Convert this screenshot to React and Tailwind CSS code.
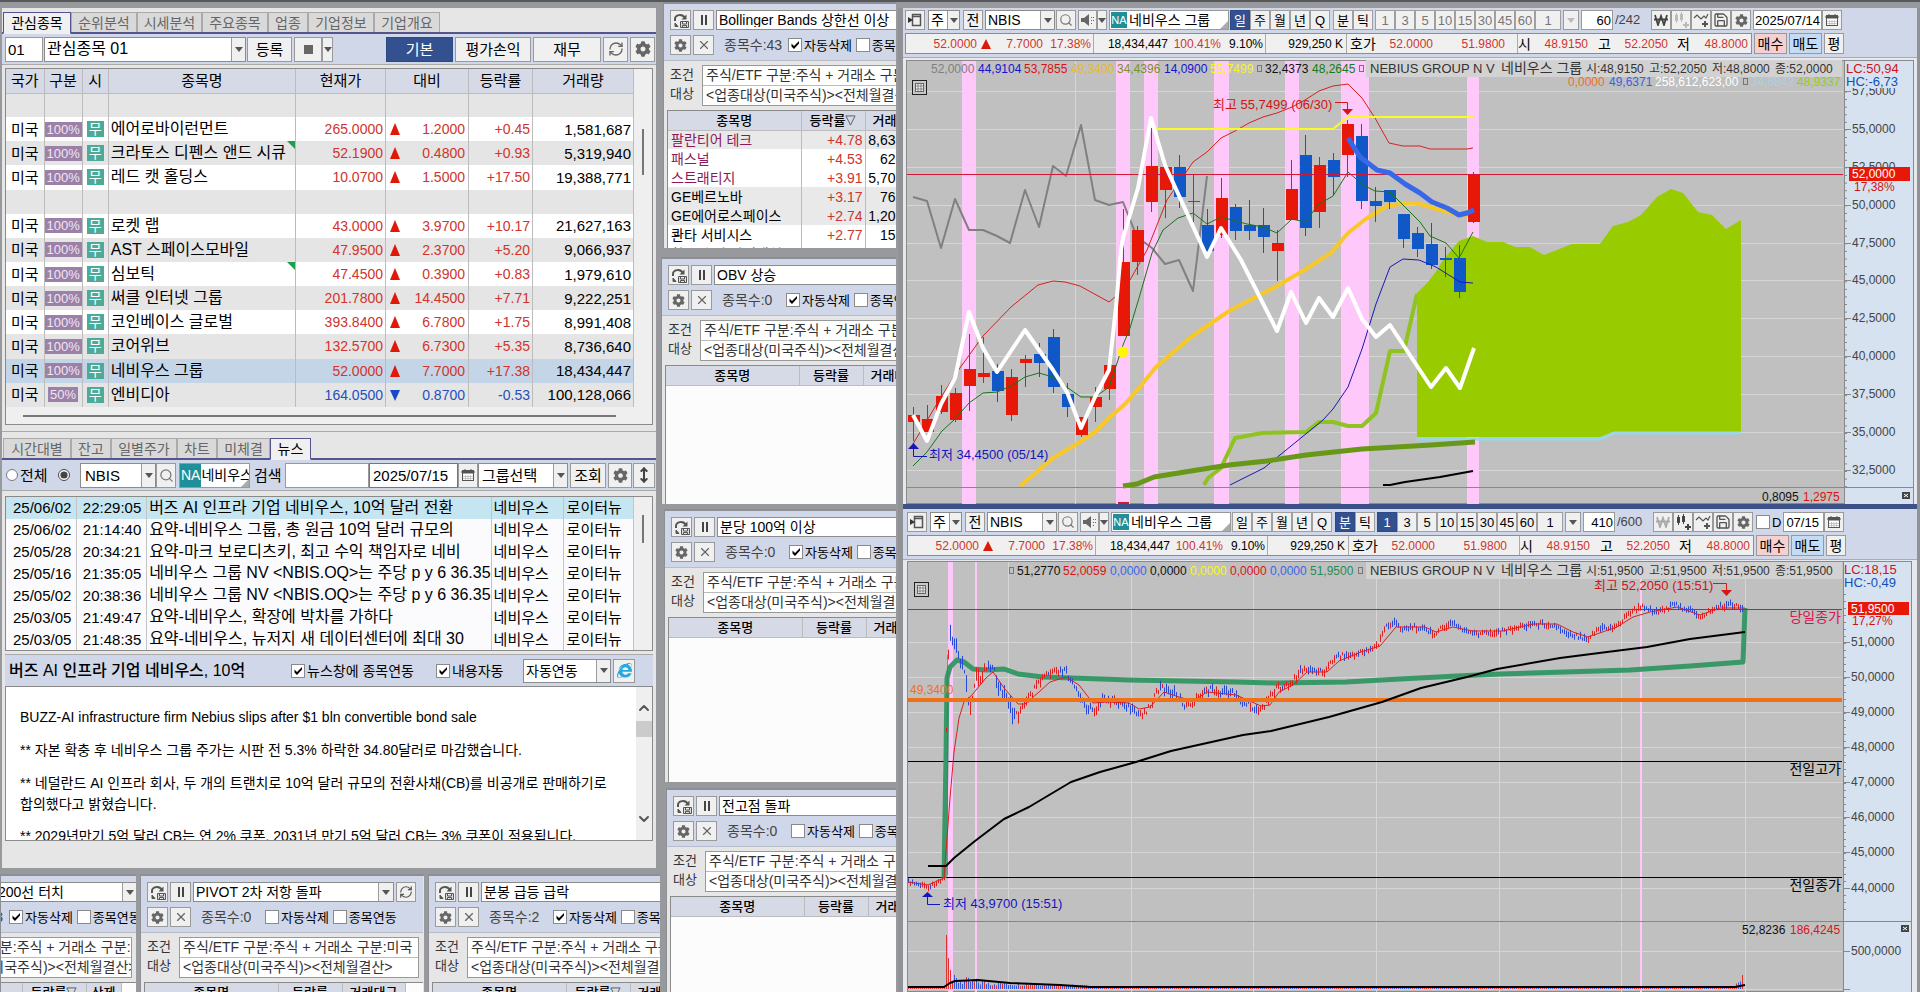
import React from "react";
import { FaCog, FaInternetExplorer } from "react-icons/fa";
import { Search, Save, RefreshCw, X, ChevronUp, ChevronDown, MoveVertical } from "lucide-react";

const BTN = "flex shrink-0 items-center justify-center border border-[#9a9a9a] bg-[#f0f0f0] text-black";

const Tri = ({ c = "text-[#555]" }) => (
  <svg viewBox="0 0 8 5" className={"h-[5px] w-2 shrink-0 " + c} aria-hidden="true">
    <path d="M0 0h8L4 5z" fill="currentColor" />
  </svg>
);

const CalIcon = () => (
  <svg viewBox="0 0 14 14" className="h-[14px] w-[14px]" aria-hidden="true">
    <rect x="1.5" y="2.5" width="11" height="10" fill="#fff" stroke="#555" />
    <path d="M1 3h12v2H1zM4 1v2M10 1v2" fill="#555" stroke="#555" />
    <path d="M4.5 7v5M7 7v5M9.5 7v5M2 8.5h10M2 10.5h10" stroke="#aaa" strokeWidth=".6" />
  </svg>
);

const LoadIcon = () => (
  <svg viewBox="0 0 18 18" className="h-[18px] w-[18px]" aria-hidden="true" fill="none" stroke="#555">
    <path d="M3 10V8c0-4 7-6 10-1" strokeWidth="2" />
    <path d="M14.500 3.500v5h-5z" fill="#555" stroke="none" />
    <path d="M3 12l3 3.500H3z" fill="#555" stroke="#555" />
    <path d="M8.500 10.500h8v6h-8zM10.500 10.500v2.500h4v-2.500M10.500 16.500v-2h4v2" strokeWidth="1" fill="#ddd" />
  </svg>
);

const PauseIcon = () => (
  <svg viewBox="0 0 10 10" className="h-[10px] w-[10px]" aria-hidden="true">
    <path d="M2 0h2v10H2zM6 0h2v10H6z" fill="#444" />
  </svg>
);

function Check({ label, on, size = "h-[14px] w-[14px]" }) {
  return (
    <label className="flex shrink-0 items-center gap-[2px] whitespace-nowrap">
      <span className="grid shrink-0">
        <input type="checkbox" defaultChecked={on} className={"peer col-start-1 row-start-1 appearance-none border border-[#8a8a8a] bg-white " + size} />
        <svg viewBox="0 0 14 14" className="pointer-events-none invisible col-start-1 row-start-1 h-[14px] w-[14px] peer-checked:visible" aria-hidden="true">
          <path d="M3.500 5.500v3l2.500 2.500 5-5.500v-2.500L6 8z" fill="#000" />
        </svg>
      </span>
      {label}
    </label>
  );
}

function Combo({ label, value, w, arrow = "w-4", pad = "pl-1", h = "h-full" }) {
  return (
    <div className={"flex shrink-0 border border-[#8c8c8c] bg-white " + w + " " + h}>
      <select aria-label={label} className={"min-w-0 flex-1 appearance-none truncate bg-transparent text-black outline-none " + pad}>
        <option>{value}</option>
      </select>
      <span className={"flex shrink-0 items-center justify-center border-l border-[#9a9a9a] bg-[#f0f0f0] " + arrow}>
        <Tri />
      </span>
    </div>
  );
}

/* ---------- watch list ---------- */

const WATCH = [
  null,
  ["100%", "에어로바이런먼트", "265.0000", 1, "1.2000", "+0.45", "1,581,687"],
  ["100%", "크라토스 디펜스 앤드 시큐", "52.1900", 1, "0.4800", "+0.93", "5,319,940", true],
  ["100%", "레드 캣 홀딩스", "10.0700", 1, "1.5000", "+17.50", "19,388,771"],
  null,
  ["100%", "로켓 랩", "43.0000", 1, "3.9700", "+10.17", "21,627,163"],
  ["100%", "AST 스페이스모바일", "47.9500", 1, "2.3700", "+5.20", "9,066,937"],
  ["100%", "심보틱", "47.4500", 1, "0.3900", "+0.83", "1,979,610", true],
  ["100%", "써클 인터넷 그룹", "201.7800", 1, "14.4500", "+7.71", "9,222,251"],
  ["100%", "코인베이스 글로벌", "393.8400", 1, "6.7800", "+1.75", "8,991,408"],
  ["100%", "코어위브", "132.5700", 1, "6.7300", "+5.35", "8,736,640"],
  ["100%", "네비우스 그룹", "52.0000", 1, "7.7000", "+17.38", "18,434,447"],
  ["50%", "엔비디아", "164.0500", 0, "0.8700", "-0.53", "100,128,066"],
];

function Tabs({ items, active }) {
  return (
    <div className="flex h-[22px] shrink-0 items-stretch border-b-2 border-[#55548c] pl-px" role="tablist">
      {items.map(([t, w], i) => (
        <button
          key={t}
          type="button"
          role="tab"
          aria-selected={i === active}
          className={
            "shrink-0 border text-[14px] leading-none " + w + " " +
            (i === active ? "-mb-[2px] border-[#55548c] border-b-transparent bg-[#f0f0f0] text-black" : "border-[#aaa] border-b-0 bg-[#d9d9d9] text-[#666]")
          }
        >
          {t}
        </button>
      ))}
    </div>
  );
}

function WatchTable() {
  const td = "border-r border-[#bcbcbc] p-0";
  return (
    <div className="mx-[3px] flex h-[357px] shrink-0 flex-col border border-[#8a8a8a] bg-[#efefef]">
      <div className="flex">
        <table className="h-[338px] min-w-0 flex-1 table-fixed border-collapse whitespace-nowrap text-[14px] leading-none">
          <colgroup>
            <col className="w-[38px]" /><col className="w-[38px]" /><col className="w-[26px]" /><col />
            <col className="w-[90px]" /><col className="w-[83px]" /><col className="w-[64px]" /><col className="w-[101px]" />
          </colgroup>
          <thead>
            <tr className="h-6 bg-[#d6dae6] text-[15px]">
              {["국가", "구분", "시", "종목명", "현재가", "대비", "등락률", "거래량"].map((h) => (
                <th key={h} className={td + " border-b font-normal"}>{h}</th>
              ))}
            </tr>
          </thead>
          <tbody>
            {WATCH.map((r, i) => {
              const bg = i === 11 ? "bg-[#c5d5e8]" : i % 2 === 0 ? "bg-[#e5e5e5]" : "bg-white";
              if (!r)
                return (
                  <tr key={i} className="h-6 bg-[#e5e5e5]">
                    {[0, 1, 2, 3, 4, 5, 6, 7].map((k) => <td key={k} className={td} />)}
                  </tr>
                );
              const col = r[3] ? "text-[#d0342c]" : "text-[#1f4fc0]";
              return (
                <tr key={i} className={"h-6 " + bg}>
                  <td className={td + " text-center text-[15px]"}>미국</td>
                  <td className={td + " text-center"}><span className="inline-block bg-[#9b80a8] px-[2px] py-px text-[13px] text-[#efe6f4]">{r[0]}</span></td>
                  <td className={td + " text-center"}><span className="inline-block bg-[#4bab98] px-[2px] py-px text-[14px] text-white">무</span></td>
                  <td className={td + " relative overflow-hidden pl-[2px] text-[16px]"}>
                    {r[1]}
                    {r[7] && (
                      <svg viewBox="0 0 8 8" className="absolute right-0 top-0 h-2 w-2" aria-hidden="true"><path d="M0 0h8v8z" fill="#1e9c50" /></svg>
                    )}
                  </td>
                  <td className={td + " pr-[2px] text-right " + col}>{r[2]}</td>
                  <td className={td}>
                    <span className={"flex items-center justify-between px-[3px] " + col}>
                      <svg viewBox="0 0 12 12" className="h-3 w-3" aria-hidden="true"><path d={r[3] ? "M6 0l5 12H1z" : "M1 1h10L6 12z"} fill={r[3] ? "#e01808" : "#1848c8"} /></svg>
                      {r[4]}
                    </span>
                  </td>
                  <td className={td + " pr-[2px] text-right " + col}>{r[5]}</td>
                  <td className={td + " pr-[2px] text-right text-[15px]"}>{r[6]}</td>
                </tr>
              );
            })}
          </tbody>
        </table>
        <div className="flex w-[18px] shrink-0 flex-col items-center pt-[60px]"><div className="h-[46px] w-[2px] bg-[#777]" /></div>
      </div>
      <div className="mx-[17px] mr-9 mt-[8px] h-[2px] bg-[#777]" />
    </div>
  );
}

/* ---------- news ---------- */

const NEWS = [
  ["25/06/02", "22:29:05", "버즈 AI 인프라 기업 네비우스, 10억 달러 전환"],
  ["25/06/02", "21:14:40", "요약-네비우스 그룹, 총 원금 10억 달러 규모의"],
  ["25/05/28", "20:34:21", "요약-마크 보로디츠키, 최고 수익 책임자로 네비"],
  ["25/05/16", "21:35:05", "네비우스 그룹 NV <NBIS.OQ>는 주당 p y 6 36.35"],
  ["25/05/02", "20:38:36", "네비우스 그룹 NV <NBIS.OQ>는 주당 p y 6 36.35"],
  ["25/03/05", "21:49:47", "요약-네비우스, 확장에 박차를 가하다"],
  ["25/03/05", "21:48:35", "요약-네비우스, 뉴저지 새 데이터센터에 최대 30"],
];

function NewsSection() {
  const td = "truncate border-r border-[#c4c4c4] py-0 pr-0 [text-overflow:clip]";
  return (
    <>
      <div className="mt-[6px] border-t border-[#aaa] pt-[6px]">
        <Tabs active={5} items={[["시간대별", "w-[68px]"], ["잔고", "w-[40px]"], ["일별주가", "w-[66px]"], ["차트", "w-[40px]"], ["미체결", "w-[53px]"], ["뉴스", "w-[41px]"]]} />
      </div>
      <div className="flex h-[31px] shrink-0 items-center border-b border-[#aaa] bg-[#d0d7e8] pl-1 text-[15px] leading-none">
        <label className="flex w-[52px] shrink-0 items-center gap-[2px]"><input type="radio" name="scope" className="h-3 w-3" />전체</label>
        <label className="flex w-[22px] shrink-0 items-center"><input type="radio" name="scope" defaultChecked aria-label="종목" className="h-3 w-3 accent-[#444]" /></label>
        <Combo label="종목코드" value="NBIS" w="w-[76px]" h="h-[25px]" arrow="w-[14px]" />
        <button type="button" aria-label="종목 찾기" className={BTN + " h-[25px] w-5"}><Search className="h-[15px] w-[15px] text-[#777]" /></button>
        <div className="relative ml-[3px] flex h-[25px] w-[71px] shrink-0 items-center overflow-hidden whitespace-nowrap border border-[#999] bg-white text-[14px]">
          <span className="flex h-full items-center bg-[#1f8f9a] px-px text-white">NA</span>네비우스
          <svg viewBox="0 0 8 8" className="absolute bottom-0 right-0 h-2 w-2" aria-hidden="true"><path d="M8 0v8H0z" fill="#aaa" /></svg>
        </div>
        <label htmlFor="news-q" className="ml-1 w-[31px] shrink-0">검색</label>
        <input id="news-q" type="text" className="h-[25px] w-[84px] min-w-0 border border-[#999] bg-white px-1" />
        <input type="text" aria-label="날짜" defaultValue="2025/07/15" className="h-[25px] w-[89px] min-w-0 border border-[#777] bg-white px-[3px]" />
        <button type="button" aria-label="달력" className={BTN + " h-[25px] w-5"}><CalIcon /></button>
        <Combo label="그룹선택" value="그룹선택" w="w-[90px]" h="h-[25px]" arrow="w-[14px]" pad="pl-[3px]" />
        <button type="button" className={BTN + " ml-[2px] h-[25px] w-9"}>조회</button>
        <button type="button" aria-label="설정" className={BTN + " ml-[2px] h-[25px] w-6"}><FaCog className="h-[15px] w-[15px] text-[#666]" /></button>
        <button type="button" aria-label="높이 조절" className={BTN + " ml-px h-[25px] w-[22px]"}><MoveVertical strokeWidth={3} className="h-4 w-4 text-[#444]" /></button>
      </div>
      <div className="mx-[3px] mt-[5px] flex h-[155px] shrink-0 border border-[#8a8a8a] bg-[#efefef]">
        <table className="h-full min-w-0 flex-1 table-fixed border-collapse whitespace-nowrap bg-[#fbfbfd] text-[15px] leading-none">
          <colgroup><col className="w-[71px]" /><col className="w-[71px]" /><col /><col className="w-[74px]" /><col className="w-[72px]" /></colgroup>
          <tbody>
            {NEWS.map((n, i) => (
              <tr key={i} className={i === 0 ? "bg-[#c5e5f0]" : ""}>
                <td className={td + " pl-[7px]"}>{n[0]}</td>
                <td className={td + " pl-[6px]"}>{n[1]}</td>
                <td className={td + " pl-[2px] text-[16px]"}>{n[2]}</td>
                <td className={td + " pl-[2px]"}>네비우스</td>
                <td className={td + " pl-[3px]"}>로이터뉴</td>
              </tr>
            ))}
          </tbody>
        </table>
        <div className="flex w-[18px] shrink-0 flex-col items-center pt-[18px]"><div className="h-7 w-[2px] bg-[#777]" /></div>
      </div>
      <div className="mx-[3px] mt-[3px] flex h-8 shrink-0 items-center whitespace-nowrap border-t border-[#aaa] bg-[#d0d7e8] pl-1 text-[14px] leading-none">
        <h2 className="w-[282px] shrink-0 overflow-hidden text-[16px] font-medium leading-[22px]">버즈 AI 인프라 기업 네비우스, 10억</h2>
        <Check label="뉴스창에 종목연동" on />
        <div className="ml-[22px]"><Check label="내용자동" on /></div>
        <div className="ml-auto flex h-6 items-center gap-[2px] pr-[18px]">
          <Combo label="연동 방식" value="자동연동" w="w-[88px]" arrow="w-[14px]" pad="pl-[2px]" />
          <button type="button" aria-label="브라우저로 열기" className={BTN + " h-6 w-[22px]"}><FaInternetExplorer className="h-[15px] w-[15px] text-[#28a8e0]" /></button>
        </div>
      </div>
      <article className="mx-[3px] flex h-[155px] shrink-0 overflow-hidden border border-[#8a8a8a] bg-white">
        <div className="min-w-0 flex-1 overflow-hidden whitespace-nowrap pl-[14px] pt-5 text-[14px] leading-[21px]">
          <p>BUZZ-AI infrastructure firm Nebius slips after $1 bln convertible bond sale</p>
          <p className="mt-3">** 자본 확충 후 네비우스 그룹 주가는 시판 전 5.3% 하락한 34.80달러로 마감했습니다.</p>
          <p className="mt-3">** 네덜란드 AI 인프라 회사, 두 개의 트랜치로 10억 달러 규모의 전환사채(CB)를 비공개로 판매하기로<br />합의했다고 밝혔습니다.</p>
          <p className="mt-[11px]">** 2029년만기 5억 달러 CB는 연 2% 쿠폰, 2031년 만기 5억 달러 CB는 3% 쿠폰이 적용됩니다.</p>
        </div>
        <div className="flex w-4 shrink-0 flex-col items-center bg-[#efefef] pt-3">
          <ChevronUp strokeWidth={3} className="h-[18px] w-4 text-[#555]" />
          <div className="mt-1 h-4 w-full bg-[#cbcbcb]" />
          <ChevronDown strokeWidth={3} className="mt-auto mb-3 h-[18px] w-4 text-[#555]" />
        </div>
      </article>
    </>
  );
}

/* ---------- condition-search panels ---------- */

function Panel({ title, count, del = true, rows, heads = ["종목명", "등락률", "거래대금"], third = "w-[63px]", inner = "w-[282px]", outer = "", titlePad = "pl-[2px]" }) {
  return (
    <section className={"flex overflow-hidden border-l border-t-2 border-[#8d8f94] bg-[#e6e6e6] " + outer}>
      <div className={"flex shrink-0 flex-col " + inner}>
        <div className="h-[57px] shrink-0 border-b border-[#b9bdc8] bg-[#d0d7e8] pl-[6px] pt-[6px] text-[13px] leading-none">
          <div className="flex h-5 gap-[2px]">
            <button type="button" aria-label="불러오기" className={BTN + " w-[21px]"}><LoadIcon /></button>
            <button type="button" aria-label="일시정지" className={BTN + " w-[21px]"}><PauseIcon /></button>
            <div className="flex text-[14px]"><Combo label="조건식" value={title} w="w-[201px]" arrow="w-[15px]" pad={titlePad} /></div>
            <button type="button" aria-label="새로고침" className={BTN + " w-5"}><RefreshCw className="h-[14px] w-[14px] text-[#555]" /></button>
          </div>
          <div className="mt-[5px] flex h-5 items-center gap-[2px]">
            <button type="button" aria-label="설정" className={BTN + " h-5 w-[21px]"}><FaCog className="h-[13px] w-[13px] text-[#666]" /></button>
            <button type="button" aria-label="삭제" className={BTN + " h-5 w-[21px]"}><X className="h-[14px] w-[14px] text-[#666]" /></button>
            <span className="ml-2 w-[62px] shrink-0 whitespace-nowrap text-[14px] text-[#444]">종목수:{count}</span>
            <Check label="자동삭제" on={del} />
            <span className="ml-[2px]"><Check label="종목연동" /></span>
          </div>
        </div>
        <div className="mt-1 flex h-[41px] shrink-0 pr-1 text-[14px] leading-[19px] text-[#333]">
          <div className="w-[38px] shrink-0 pl-[6px] text-[13px]"><div>조건</div><div>대상</div></div>
          <div className="min-w-0 flex-1 overflow-hidden whitespace-nowrap border border-[#999] bg-white">
            <div className="h-5 border-b border-[#bbb] pl-[3px]">주식/ETF 구분:주식 + 거래소 구분:미국</div>
            <div className="pl-[3px]">&lt;업종대상(미국주식)&gt;&lt;전체월결산&gt;</div>
          </div>
        </div>
        <div className="ml-[3px] mt-[4px] flex-1 overflow-hidden border-l border-t border-[#8a8a8a] bg-[#fcfcfd]">
          <table className={"table-fixed border-collapse whitespace-nowrap text-[14px] leading-none " + (third === "w-[63px]" ? "w-[260px]" : "w-[232px]")}>
            <colgroup><col className="w-[133px]" /><col className="w-[64px]" /><col className={third} /></colgroup>
            <thead>
              <tr className="h-[19px] bg-[#d6dae6] text-[13px]">
                {heads.map((h, i) => (
                  <th key={i} className="border-b border-r border-[#bcbcbc] p-0 font-medium">
                    <span className="inline-flex items-center">{h.replace("▽", "")}{h.includes("▽") && <svg viewBox="0 0 12 12" className="h-[11px] w-[11px]" aria-hidden="true"><path d="M1 1h10L6 11z" fill="none" stroke="#555" /></svg>}</span>
                  </th>
                ))}
              </tr>
            </thead>
            <tbody>
              {(rows || []).map((r, i) => (
                <tr key={i} className={"h-[19px] " + ([0, 3, 4].includes(i) ? "bg-[#e9e9e9]" : "bg-white")}>
                  <td className={"border-r border-[#bcbcbc] p-0 pl-[3px] " + (r[3] ? "text-[#8b1a5a]" : "text-black")}>{r[0]}</td>
                  <td className="border-r border-[#bcbcbc] p-0 pr-[2px] text-right text-[#d0342c]">{r[1]}</td>
                  <td className="p-0 pl-0 text-left"><span className="inline-block w-[30px] text-right">{r[2]}</span></td>
                </tr>
              ))}
            </tbody>
          </table>
        </div>
      </div>
    </section>
  );
}

const BOLL = [
  ["팔란티어 테크", "+4.78", "8,63", true],
  ["패스널", "+4.53", "62", true],
  ["스트래티지", "+3.91", "5,70", true],
  ["GE베르노바", "+3.17", "76"],
  ["GE에어로스페이스", "+2.74", "1,20"],
  ["콴타 서비시스", "+2.77", "15"],
  ["찰스 슈왑 파이낸셜", "+2.47", "30", true],
];

/* ---------- chart toolbars ---------- */

function ChartBar({ second }) {
  const P = ({ t, on, dim, w = "w-5" }) => (
    <button type="button" aria-pressed={!!on} className={"flex h-5 shrink-0 items-center justify-center border text-[13px] " + w + " " + (on ? "border-[#2d4a88] bg-[#33508f] text-white" : "border-[#a0a0a0] bg-[#f0f0f0] " + (dim ? "text-[#777]" : "text-black"))}>{t}</button>
  );
  const dim = !second;
  const ico = BTN + " h-5 w-5";
  const dimmed = second ? "#aaa" : "#444";
  const dimmed2 = second ? "#444" : "#bbb";
  const val = (t, w, c) => <span className={"shrink-0 text-right " + w + " " + c}>{t}</span>;
  const red = "text-[#d0342c]";
  return (
    <div className={"flex h-[50px] shrink-0 flex-col overflow-hidden whitespace-nowrap border-b border-[#aab] bg-[#d0d7e8] pt-[2px] leading-none " + (second ? "pl-1" : "pl-[2px]")}>
      <div className="flex h-5 items-stretch text-[14px]">
        <button type="button" aria-label="메뉴 열기" className={BTN + " w-5"}>
          <svg viewBox="0 0 14 14" className="h-[14px] w-[14px]" aria-hidden="true"><path d="M4.500 1.500h8v11h-8zM4.500 3.500h8" fill="none" stroke="#555" strokeWidth="1.500" /><path d="M0 4l5 3-5 3z" fill="#333" /></svg>
        </button>
        <div className="ml-[3px] flex"><Combo label="시장" value="주" w="w-8" arrow="w-3" pad="pl-[2px]" /></div>
        <button type="button" className={BTN + " ml-[3px] w-5"}>전</button>
        <div className="ml-[2px] flex"><Combo label="종목" value="NBIS" w="w-[70px]" arrow="w-[14px]" pad="pl-[2px]" /></div>
        <button type="button" aria-label="찾기" className={BTN + " ml-px w-5"}><Search className="h-[14px] w-[14px] text-[#777]" /></button>
        <button type="button" aria-label="소리" className={BTN + " ml-[2px] w-[19px]"}>
          <svg viewBox="0 0 14 12" className="h-3 w-[14px]" aria-hidden="true"><path d="M0 4h3l5-4v12L3 8H0z" fill="#666" /><path d="M10 3h1v1h-1zM10 6h1v1h-1zM10 9h1v1h-1zM12 3h1v1h-1zM12 6h1v1h-1z" fill="#666" /></svg>
        </button>
        <button type="button" aria-label="소리 옵션" className={BTN + " w-[10px]"}><Tri /></button>
        <div className="relative ml-[2px] flex w-[120px] items-center border border-[#999] bg-white">
          <span className="ml-px flex h-[16px] w-4 items-center justify-center bg-[#1f8f9a] text-[11px] text-white">NA</span>
          <span className="ml-[2px]">네비우스 그룹</span>
          <svg viewBox="0 0 8 8" className="absolute bottom-0 right-0 h-2 w-2" aria-hidden="true"><path d="M8 0v8H0z" fill="#aaa" /></svg>
        </div>
        <div className="ml-px flex"><P t="일" on={!second} /><P t="주" /><P t="월" /><P t="년" /><P t="Q" /></div>
        <div className="ml-[3px] flex"><P t="분" on={second} /><P t="틱" /></div>
        <div className="ml-[2px] flex">
          <P t="1" on={second} dim={dim} />
          {["3", "5", "10", "15", "30", "45", "60"].map((t) => <P key={t} t={t} dim={dim} />)}
          <P t="1" dim={dim} w="w-[26px]" />
        </div>
        <button type="button" aria-label="주기 선택" className={BTN + " ml-[2px] w-4"}><Tri c={dim ? "text-[#bbb]" : "text-[#555]"} /></button>
        <input type="text" aria-label="봉 개수" defaultValue={second ? "410" : "60"} className="ml-[2px] w-8 border border-[#999] bg-white pr-px text-right text-[13px]" />
        <span className="w-[38px] shrink-0 pl-[2px] text-[13px] leading-5 text-[#444]">{second ? "/600" : "/242"}</span>
        <button type="button" aria-label="통화" className={ico}>
          <svg viewBox="0 0 14 12" className="h-3 w-[14px]" fill="none" stroke={dimmed} strokeWidth="1.800" aria-hidden="true"><path d="M1 1l3 10L7 2l3 9 3-10M0 5.500h14" /></svg>
        </button>
        <button type="button" aria-label="봉 추가" className={ico}>
          <svg viewBox="0 0 16 16" className="h-4 w-4" aria-hidden="true"><path d="M2 3h3v6H2zM7 2h3v6H7zM3 1h1v10H3zM8 0h1v10H8z" fill={dimmed2} /><path d="M10 13h6M13 10v6" stroke={dimmed2} strokeWidth="2" /></svg>
        </button>
        <button type="button" aria-label="지표 추가" className={ico}>
          <svg viewBox="0 0 16 16" className="h-4 w-4" fill="none" stroke="#555" aria-hidden="true"><path d="M1 6l3-3 4 4 3-3 2 2 2-4" strokeWidth="1.200" /><path d="M9 12h6M12 9v6" strokeWidth="2" /></svg>
        </button>
        <button type="button" aria-label="저장" className={ico}><Save className="h-4 w-4 text-[#555]" /></button>
        <button type="button" aria-label="설정" className={ico}><FaCog className="h-[13px] w-[13px] text-[#666]" /></button>
        {second && <div className="ml-[3px] flex items-center text-[13px]"><Check label="D" /></div>}
        <input type="text" aria-label="기준일" defaultValue={second ? "07/15" : "2025/07/14"} className={"ml-[2px] min-w-0 border border-[#999] bg-white text-[13px] " + (second ? "w-[41px] pl-[2px]" : "w-[69px] pl-px")} />
        <button type="button" aria-label="달력" className={ico}><CalIcon /></button>
      </div>
      <div className="mt-[3px] flex h-[21px] gap-[2px] text-[12px]">
        <div className="flex w-[847px] shrink-0 items-center border border-[#8c8c8c] bg-[#f0f0f0]">
          {val("52.0000", "w-[71px]", red)}
          <svg viewBox="0 0 10 10" className="ml-1 h-[10px] w-[10px] shrink-0" aria-hidden="true"><path d="M5 0l5 10H0z" fill="#e01808" /></svg>
          {val("7.7000", "w-[52px]", red)}{val("17.38%", "w-[48px]", red)}
          <span className="ml-[2px] h-full w-px bg-[#aaa]" />
          {val("18,434,447", "w-[74px]", "")}{val("100.41%", "w-[53px]", red)}{val("9.10%", "w-[42px]", "")}
          <span className="ml-[2px] h-full w-px bg-[#aaa]" />
          {val("929,250 K", "w-[77px]", "")}
          <span className="ml-[3px] h-full w-px bg-[#aaa]" />
          <span className="ml-[3px] w-[26px] shrink-0 text-[14px]">호가</span>
          {val("52.0000", "w-[57px]", red)}{val("51.9800", "w-[72px]", red)}
          <span className="ml-3 h-full w-px bg-[#aaa]" />
          <span className="w-4 shrink-0 text-[14px]">시</span>{val("48.9150", "w-[54px]", red)}
          <span className="w-[23px] shrink-0 text-right text-[14px]">고</span>{val("52.2050", "w-[57px]", red)}
          <span className="w-[22px] shrink-0 text-right text-[14px]">저</span>{val("48.8000", "w-[58px]", red)}
        </div>
        <button type="button" className="w-[33px] shrink-0 border border-[#999] bg-[#f5d0d0] text-[14px]">매수</button>
        <button type="button" className="w-[33px] shrink-0 border border-[#999] bg-[#c3dcf3] text-[14px]">매도</button>
        <button type="button" className={BTN + " w-5 text-[14px]"}>평</button>
      </div>
    </div>
  );
}

/* ---------- charts ---------- */

const R = "#e81808", B = "#1058c8";
const CANDLES = [
  [R, 415, 422, 407, 441], [R, 419, 432, 405, 432], [R, 396, 412, 385, 414], [R, 393, 420, 388, 422], [R, 369, 386, 334, 411],
  [R, 373, 377, 337, 383], [B, 371, 391, 364, 402], [R, 377, 415, 369, 421], [R, 359, 363, 355, 387], [B, 354, 363, 343, 377],
  [B, 337, 387, 329, 393], [B, 394, 407, 383, 417], [R, 417, 435, 417, 437], [R, 397, 407, 387, 422], [R, 365, 389, 350, 400],
  [R, 262, 336, 209, 336], [R, 230, 262, 226, 275], [R, 166, 202, 128, 212], [R, 167, 190, 165, 218], [B, 167, 197, 155, 208],
  [R, 201, 202, 175, 222], [B, 225, 251, 209, 252], [R, 198, 235, 178, 238], [B, 207, 231, 204, 240], [B, 225, 231, 200, 240],
  [B, 225, 237, 208, 253], [R, 243, 251, 230, 281], [R, 189, 220, 160, 220], [B, 155, 228, 135, 236], [R, 165, 212, 157, 228],
  [B, 160, 177, 153, 195], [R, 124, 155, 120, 177], [B, 136, 201, 124, 209], [B, 201, 206, 187, 222], [B, 190, 202, 190, 209],
  [B, 214, 239, 214, 248], [B, 233, 249, 227, 257], [B, 244, 265, 223, 269], [B, 258, 260, 247, 277], [B, 258, 292, 245, 298],
  [R, 175, 222, 172, 223],
];

const GRAY = "913,197 927,201 941,248 955,199 969,230 983,230 997,236 1010,243 1025,190 1039,227 1053,166 1066,176 1081,125 1095,200 1109,205 1123,202 1137,237 1152,248 1165,264 1179,260 1193,291 1198,250 1207,176";
const WHITE = "913,415 927,441 941,404 955,378 969,312 983,348 997,372 1025,330 1053,370 1067,392 1081,428 1095,397 1109,370 1116,307 1121,250 1123,238 1138,188 1151,118 1165,165 1207,257 1221,228 1241,260 1277,331 1291,292 1306,323 1319,298 1333,317 1348,288 1362,319 1376,337 1390,325 1431,387 1446,368 1460,388 1474,348";
const REDBAND = "913,444 938,402 957,372 983,336 1011,307 1038,285 1053,281 1065,282 1080,286 1109,302 1115,297 1130,280 1147,250 1167,200 1193,162 1207,152 1221,138 1235,131 1249,123 1263,117 1277,113 1292,107 1305,100 1319,91 1333,86 1348,84 1362,98 1375,118 1389,143 1403,146 1420,146 1430,149 1467,149 1473,148";
const GREEN = "913,466 927,452 942,431 954,420 969,403 983,393 997,392 1011,386 1025,377 1039,373 1053,377 1068,388 1081,397 1095,397 1109,387 1123,345 1130,328 1139,298 1152,253 1163,230 1178,218 1193,213 1207,224 1221,217 1247,224 1263,227 1277,233 1292,219 1305,222 1319,204 1333,196 1348,172 1363,185 1375,191 1390,192 1420,222 1430,236 1446,243 1459,258 1473,232";
const BLUE = "1348,138 1360,157 1377,170 1390,173 1405,184 1420,193 1432,202 1447,208 1459,215 1467,213 1474,210";
const GOLD = "1020,486 1053,458 1080,442 1095,432 1109,418 1125,404 1139,388 1156,367 1191,337 1229,311 1277,286 1306,269 1332,252 1348,233 1367,218 1387,206 1407,203 1420,204 1440,210 1460,215 1473,215";
const NAVY = "1230,485 1264,468 1323,420 1333,409 1348,387 1362,349 1376,304 1390,267 1403,259 1419,260 1436,267 1460,282 1473,283";
const LIME = "1204,485 1208,478 1221,468 1235,438 1262,433 1306,432 1319,422 1333,422 1348,426 1362,426 1376,413 1390,351 1404,351 1417,294";
const AREA = "1417,437 1417,293 1428,282 1437,270 1443,260 1459,241 1473,236 1487,242 1503,242 1515,247 1530,247 1544,255 1572,244 1600,244 1613,226 1628,222 1641,215 1657,197 1671,189 1683,193 1698,212 1712,215 1726,229 1741,220 1741,432 1613,432 1600,437";
const OLIVE = "1123,486 1137,484 1154,477 1191,471 1229,465 1267,461 1306,455 1362,449 1431,445 1475,442";

const Line = ({ p, c, w = 1 }) => <polyline points={p} fill="none" stroke={c} strokeWidth={w} strokeLinejoin="round" />;
const Tx = ({ x, y, c = "#333", s = 12, a, children }) => <text x={x} y={y} fill={c} fontSize={s} textAnchor={a}>{children}</text>;

const Badge = ({ x, y }) => (
  <g>
    <rect x={x + 0.5} y={y + 0.5} width="14" height="14" fill="#c8c8c8" stroke="#222" />
    <rect x={x + 3.5} y={y + 3.5} width="8" height="8" fill="#eee" stroke="#666" />
    <path d={`M${x + 6} ${y + 3}v9M${x + 9} ${y + 3}v9M${x + 3} ${y + 6}h9M${x + 3} ${y + 9}h9`} stroke="#666" strokeWidth=".7" />
  </g>
);

const CloseBox = ({ x, y }) => (
  <g><rect x={x} y={y} width="8" height="7" fill="#444" /><path d={`M${x + 2} ${y + 2}l4 3m0-3l-4 3`} stroke="#fff" /></g>
);

const Sq = ({ x, y }) => <rect x={x} y={y} width="4" height="6" fill="none" stroke="#777" />;

function Title({ v, y }) {
  return (
    <g>
      <rect x="1366" y={y - 13} width="476" height="17" fill="#d2d2d2" />
      <Tx x={1370} y={y} s={13}>NEBIUS GROUP N V</Tx>
      <Tx x={1501} y={y} s={14}>네비우스 그룹</Tx>
      {v.map((t, i) => <Tx key={i} x={1586 + i * 63} y={y}>{t}</Tx>)}
    </g>
  );
}

function DailyChart() {
  const grid = [91, 129, 167, 205, 243, 280, 318, 356, 394, 432, 470];
  const ticks = Array.from({ length: 53 }, (_, i) => 92 + i * 7.59).filter((y) => y < 487);
  return (
    <svg viewBox="903 58 1014 446" preserveAspectRatio="none" className="block h-0 w-full shrink-0 grow-[446] bg-[#e6e8ee]" role="img" aria-label="NBIS 일봉 차트">
      <rect x="906.500" y="60.500" width="1007" height="443" fill="#c0c0c0" stroke="#8a8a8a" />
      <rect x="1845" y="61" width="68" height="443" fill="#d6e2f0" />
      <path d={grid.map((y) => `M907 ${y + 0.5}H1843`).join("") + "M1075.500 61V504M1355.500 61V504"} stroke="#d6d6d6" />
      {[[962, 14], [1116, 14], [1144, 14], [1214, 15], [1285, 14], [1341, 28], [1467, 12]].map(([x, w]) => <rect key={x} x={x} y="61" width={w} height="443" fill="#ffc8fa" />)}
      <Line p={GRAY} c="#808080" w={2} />
      <Line p={LIME} c="#8fc31f" w={4} />
      <Line p={REDBAND} c="#d82020" />
      <Line p="1151,129 1333,129 1348,117 1473,117" c="#fafa28" w={2} />
      <polygon points={AREA} fill="#98cc00" />
      <Line p="1417,439 1601,439 1614,433 1741,433" c="#98d8e8" w={3} />
      <Line p={GOLD} c="#f8c828" w={4} />
      {CANDLES.map(([c, t, b, h, l], i) => {
        const x = 913 + i * 14;
        return <g key={i} fill={c}><rect x={x} y={h} width="1" height={l - h} /><rect x={x - 5} y={t} width="12" height={Math.max(1, b - t)} /></g>;
      })}
      <Line p={GREEN} c="#18741c" />
      <Line p={NAVY} c="#1818b8" />
      <path d="M907 174.500H1843" stroke="#d01838" />
      <Line p={BLUE} c="#3868e8" w={5} />
      <Line p={WHITE} c="#fff" w={4} />
      <Line p={OLIVE} c="#689818" w={5} />
      <Line p="1383,485 1390,485 1405,482 1440,477 1473,471" c="#000" w={2} />
      <circle cx="1123" cy="352" r="5.500" fill="#fff800" />
      <path d="M907 487.500H1913" stroke="#888" />
      <rect x="1118" y="502" width="11" height="2" fill="#d01838" />
      <path d={"M1844.500 60V504" + ticks.map((y) => `M1845 ${y}h2`).join("") + grid.map((y) => `M1845 ${y + 0.5}h6`).join("")} stroke="#888" />
      <Title y={73} v={["시:48,9150", "고:52,2050", "저:48,8000", "종:52,0000"]} />
      {[[931, "52,0000", "#808080"], [978, "44,9104", "#1414d0"], [1024, "53,7855", "#d81414"], [1071, "49,3400", "#e6b83c"], [1117, "34,4396", "#7a9028"], [1164, "14,0900", "#1414d0"], [1210, "55,7499", "#f6f61e"], [1265, "32,4373", "#111"], [1312, "48,2645", "#147a1c"]].map(([x, t, c]) => <Tx key={x} x={x} y={73} c={c}>{t}</Tx>)}
      <Sq x={1257.5} y={65.5} /><Sq x={1359.5} y={65.5} />
      <Tx x={1568} y={86} c="#f07020">0,0000</Tx><Tx x={1609} y={86} c="#3c60e0">49,6371</Tx><Tx x={1655} y={86} c="#fff">258,612,623,00</Tx>
      <Sq x={1743.5} y={78.5} /><Tx x={1751} y={86} c="#a8d0e4">34,6842</Tx><Tx x={1797} y={86} c="#98cc18">48,9337</Tx>
      <Badge x={912} y={80} />
      <Tx x={1213} y={109} c="#d01414" s={13}>최고 55,7499 (06/30)</Tx>
      <path d="M1335 102.500H1347.500V109" fill="none" stroke="#d81414" /><path d="M1342 109h11l-5.500 6z" fill="#d81414" />
      <Tx x={929} y={459} c="#1414c0" s={13}>최저 34,4500 (05/14)</Tx>
      <path d="M927 456.500H913.500V448" fill="none" stroke="#1414c0" /><path d="M908 449h11l-5.500-6z" fill="#1414c0" />
      {["57,5000", "55,0000", "52,5000", "50,0000", "47,5000", "45,0000", "42,5000", "40,0000", "37,5000", "35,0000", "32,5000"].map((t, i) => <Tx key={t} x={1852} y={grid[i] + 4} c="#444">{t}</Tx>)}
      <rect x="1845" y="61" width="68" height="27" fill="#d6e2f0" />
      <Tx x={1846} y={73} c="#d01414" s={13}>LC:50,94</Tx><Tx x={1846} y={86} c="#1050b8" s={13}>HC:-6,73</Tx>
      <rect x="1849" y="167" width="61" height="14" fill="#e81808" /><Tx x={1852} y={178} c="#fff">52,0000</Tx><Tx x={1854} y={191} c="#d01414">17,38%</Tx>
      <Tx x={1762} y={501} c="#111">0,8095</Tx><Tx x={1803} y={501} c="#d81414">1,2975</Tx>
      <CloseBox x={1902} y={492} />
    </svg>
  );
}

const PRICE = [[908, 882], [928, 887], [944, 878], [947, 660], [950, 632], [953, 642], [957, 654], [965, 680], [971, 708], [975, 680], [986, 665], [990, 662], [1000, 690], [1010, 710], [1016, 714], [1025, 705], [1034, 690], [1045, 675], [1065, 671], [1075, 690], [1085, 706], [1095, 711], [1100, 700], [1125, 704], [1135, 714], [1143, 713], [1150, 705], [1160, 687], [1175, 694], [1185, 706], [1195, 700], [1203, 690], [1230, 692], [1245, 703], [1260, 711], [1270, 694], [1280, 687], [1290, 686], [1300, 670], [1325, 671], [1335, 656], [1355, 655], [1378, 645], [1385, 626], [1395, 623], [1400, 628], [1420, 627], [1432, 634], [1452, 623], [1470, 634], [1500, 632], [1530, 624], [1550, 624], [1570, 634], [1588, 638], [1597, 629], [1615, 627], [1630, 612], [1645, 606], [1655, 612], [1675, 605], [1690, 610], [1698, 618], [1715, 608], [1730, 604], [1745, 608]];
const noise = (n) => { const v = Math.sin(n * 12.9898) * 43758.5453; return v - Math.floor(v); };
const at = (x) => {
  const i = Math.max(1, PRICE.findIndex((p) => p[0] >= x));
  const [x0, y0] = PRICE[i - 1], [x1, y1] = PRICE[i];
  return y0 + ((y1 - y0) * (x - x0)) / (x1 - x0);
};
const BARS = Array.from({ length: 418 }, (_, i) => {
  const x = 908 + i * 2;
  const amp = x < 946 ? 3 : x < 1020 ? 15 : x < 1300 ? 7 : 5;
  const mid = at(x) + (noise(i) - 0.5) * amp;
  const h = 3 + noise(i + 500) * amp;
  return { x, y: mid - h / 2, h, c: at(x + 3) - at(x) + (noise(i + 90) - 0.5) * 4 < 0 ? "#e02020" : "#2848d8" };
});
const VOLS = Array.from({ length: 418 }, (_, i) => {
  const x = 908 + i * 2;
  let h = 1 + noise(i + 7) * 1.5;
  if (x >= 950 && x < 1090) h = 3 + noise(i + 7) * 12 * Math.exp(-(x - 950) / 60);
  if (x === 946) h = 54; else if (x === 948) h = 31; else if (x === 950) h = 19;
  if (x > 1735) h = 5 + (x - 1735) / 2;
  if (x === 1742) h = 14;
  return { x, h, c: noise(i + 33) > 0.5 || x < 951 ? "#e03030" : "#3858d8" };
});
const GREEN2 = "944,878 946,758 947,678 950,667 957,660 964,662 973,669 986,670 1004,669 1018,674 1043,677 1129,680 1236,682 1275,683 1346,682 1400,679 1457,676 1500,674 1630,670 1690,666 1743,662 1745,608";
const BLACK2 = "928,866 946,866 954,858 975,841 1004,819 1029,807 1071,782 1100,772 1136,762 1171,751 1243,735 1271,731 1329,717 1382,702 1421,688 1467,677 1497,669 1560,658 1607,652 1647,647 1690,639 1745,632";
const RED2 = "908,882 928,885 944,878 950,798 954,752 959,718 964,702 971,696 986,678 993,672 1004,688 1018,704 1025,704 1039,692 1050,682 1066,677 1079,685 1093,703 1107,702 1129,703 1139,709 1150,707 1164,692 1179,697 1193,701 1207,692 1236,695 1261,706 1270,705 1279,692 1293,685 1307,672 1327,672 1339,661 1361,652 1380,646 1396,627 1425,627 1436,632 1453,627 1473,631 1503,631 1533,624 1557,624 1573,632 1588,637 1617,627 1633,617 1650,612 1677,607 1700,615 1720,608 1745,608";

function MinuteChart() {
  const grid = [642, 677, 712, 747, 782, 817, 852, 888];
  const ticks = Array.from({ length: 46 }, (_, i) => 594 + i * 7).filter((y) => y < 920);
  return (
    <svg viewBox="903 560 1014 432" preserveAspectRatio="none" className="block h-0 w-full shrink-0 grow-[432] bg-[#e6e8ee]" role="img" aria-label="NBIS 분봉 차트">
      <rect x="907.500" y="561.500" width="1004" height="430" fill="#c0c0c0" stroke="#8a8a8a" />
      <rect x="1844" y="562" width="67" height="430" fill="#d6e2f0" />
      <path d={grid.concat([951, 989]).map((y) => `M908 ${y + 0.5}H1842`).join("") + [1008, 1131, 1253, 1376, 1499, 1621, 1745].map((x) => `M${x + 0.5} 562V992`).join("")} stroke="#d6d6d6" />
      <rect x="948" y="562" width="5" height="430" fill="#ffc8fa" /><rect x="975" y="562" width="2" height="430" fill="#ffc8fa" /><rect x="1640" y="577" width="2" height="415" fill="#ffc8fa" />
      <path d="M908 761.500H1842M908 877.500H1842" stroke="#000" />
      <Line p={GREEN2} c="#389868" w={5} />
      {BARS.map((b, i) => <rect key={i} x={b.x} y={b.y} width="1" height={b.h} fill={b.c} />)}
      <rect x="947" y="655" width="1" height="220" fill="#e03030" opacity=".6" />
      <Line p={RED2} c="#d82020" />
      <path d="M908 609.500H1842" stroke="#d01838" />
      <rect x="908" y="698" width="934" height="4" fill="#f07018" />
      <Line p={BLACK2} c="#000" w={2} />
      <path d="M908 921.500H1911" stroke="#888" />
      {VOLS.map((b, i) => <rect key={i} x={b.x} y={989 - b.h} width="1" height={b.h} fill={b.c} />)}
      <Line p="908,987 944,987 950,983 955,981 978,980 1010,983 1060,985 1090,987 1735,987 1745,985" c="#000" w={2} />
      <path d={"M1843.500 562V992" + ticks.map((y) => `M1844 ${y + 0.5}h2`).join("") + grid.concat([951, 989]).map((y) => `M1844 ${y + 0.5}h6`).join("")} stroke="#888" />
      <Sq x={1009.5} y={567.5} />
      {[[1017, "51,2770", "#111"], [1063, "52,0059", "#d81414"], [1110, "0,0000", "#3c64e8"], [1150, "0,0000", "#111"], [1190, "0,0000", "#f6f61e"], [1230, "0,0000", "#d81414"], [1270, "0,0000", "#3c64e8"], [1310, "51,9500", "#288c58"]].map(([x, t, c]) => <Tx key={x} x={x} y={575} c={c}>{t}</Tx>)}
      <Sq x={1358.5} y={567.5} />
      <Title y={575} v={["시:51,9500", "고:51,9500", "저:51,9500", "종:51,9500"]} />
      <Badge x={914} y={582} />
      <Tx x={1594} y={590} c="#d01414" s={13}>최고 52,2050 (15:51)</Tx>
      <path d="M1713 583.500H1726.500V590" fill="none" stroke="#d81414" /><path d="M1721 590h11l-5.500 6z" fill="#d81414" />
      <Tx x={943} y={908} c="#1414c0" s={13}>최저 43,9700 (15:51)</Tx>
      <path d="M940 904.500H927.500V897" fill="none" stroke="#1414c0" /><path d="M922 897h11l-5.500-5z" fill="#1414c0" />
      <Tx x={910} y={694} c="#f07018">49,3400</Tx>
      <Tx x={1841} y={622} c="#d81450" s={14} a="end">당일종가</Tx>
      <Tx x={1841} y={774} c="#000" s={14} a="end">전일고가</Tx>
      <Tx x={1841} y={890} c="#000" s={14} a="end">전일종가</Tx>
      {["51,0000", "50,0000", "49,0000", "48,0000", "47,0000", "46,0000", "45,0000", "44,0000"].map((t, i) => <Tx key={t} x={1851} y={grid[i] + 4} c="#444">{t}</Tx>)}
      <Tx x={1851} y={955} c="#444">500,0000</Tx>
      <Tx x={1844} y={574} c="#d01414" s={13}>LC:18,15</Tx><Tx x={1844} y={587} c="#1050b8" s={13}>HC:-0,49</Tx>
      <rect x="1848" y="602" width="61" height="13" fill="#e81808" /><Tx x={1851} y={613} c="#fff">51,9500</Tx><Tx x={1852} y={625} c="#d01414">17,27%</Tx>
      <Tx x={1742} y={934} c="#111">52,8236</Tx><Tx x={1790} y={934} c="#d81414">186,4245</Tx>
      <CloseBox x={1901} y={925} />
    </svg>
  );
}

export default function App() {
  return (
    <main className="flex h-screen flex-col overflow-hidden bg-[#97999d] text-black [font-family:'Liberation_Sans_Narrow','Liberation_Sans','Noto_Sans_CJK_KR',sans-serif]">
      <div className="h-[2px] shrink-0 bg-[#55585a]" />
      <div className="grid min-h-0 flex-1 grid-cols-[660fr_238fr_1022fr] grid-rows-1">
        <div className="flex min-h-0 min-w-0 flex-col overflow-hidden">
          <section className="ml-[2px] mr-1 mt-[6px] flex h-[860px] shrink-0 flex-col bg-[#e6e6e6] pt-1">
            <Tabs active={0} items={[["관심종목", "w-[68px]"], ["순위분석", "w-[66px]"], ["시세분석", "w-[65px]"], ["주요종목", "w-[66px]"], ["업종", "w-[40px]"], ["기업정보", "w-[66px]"], ["기업개요", "w-[66px]"]]} />
            <div className="flex h-[31px] shrink-0 items-center border-b border-[#aaa] bg-[#d0d7e8] pl-[3px] text-[15px] leading-none">
              <input type="text" aria-label="그룹 번호" defaultValue="01" className="h-[25px] w-[38px] shrink-0 border border-[#999] bg-white pl-[2px]" />
              <div className="ml-px flex text-[16px]"><Combo label="관심그룹" value="관심종목 01" w="w-[202px]" h="h-[25px]" arrow="w-[14px]" pad="pl-[2px]" /></div>
              <button type="button" className={BTN + " ml-px h-[25px] w-[45px]"}>등록</button>
              <button type="button" aria-label="색상" className={BTN + " ml-[2px] h-[25px] w-7"}><span className="h-[9px] w-[9px] bg-[#666]" /></button>
              <button type="button" aria-label="색상 선택" className={BTN + " h-[25px] w-[11px]"}><Tri /></button>
              <div className="ml-auto flex gap-[2px] pr-px">
                <button type="button" className="h-[25px] w-[67px] border border-[#2d4a88] bg-[#33508f] text-white">기본</button>
                <button type="button" className={BTN + " h-[25px] w-[76px]"}>평가손익</button>
                <button type="button" className={BTN + " h-[25px] w-[68px]"}>재무</button>
                <button type="button" aria-label="새로고침" className={BTN + " h-[25px] w-[25px]"}><RefreshCw className="h-4 w-4 text-[#666]" /></button>
                <button type="button" aria-label="설정" className={BTN + " h-[25px] w-[25px]"}><FaCog className="h-4 w-4 text-[#666]" /></button>
              </div>
            </div>
            <div className="h-[3px] shrink-0" />
            <WatchTable />
            <NewsSection />
          </section>
          <div className="mt-[6px] flex min-h-0 flex-1 gap-1">
            <Panel title="200선 터치" count="43" inner="w-[251px]" titlePad="pl-[60px]" outer="w-[136px] shrink-0 justify-end" heads={["종목명", "등락률▽", "삭제"]} third="w-[35px]" />
            <Panel title="PIVOT 2차 저항 돌파" count="0" del={false} outer="w-[284px] shrink-0" />
            <Panel title="분봉 급등 급락" count="2" outer="min-w-0 flex-1" heads={["종목명", "등락률▽", "거래대금"]} />
          </div>
        </div>
        <div className="flex min-h-0 min-w-0 flex-col overflow-hidden pr-[2px]">
          <Panel title="Bollinger Bands 상한선 이상" count="43" rows={BOLL} outer="ml-[3px] h-[246px] shrink-0" heads={["종목명", "등락률▽", "거래대금"]} />
          <Panel title="OBV 상승" count="0" outer="ml-px mt-[9px] h-[247px] shrink-0" />
          <Panel title="분당 100억 이상" count="0" outer="ml-1 mt-[5px] h-[273px] shrink-0" />
          <Panel title="전고점 돌파" count="0" del={false} outer="ml-[6px] mt-[6px] min-h-0 flex-1" />
        </div>
        <div className="mt-[6px] flex min-h-0 min-w-0 flex-col overflow-hidden border-r-[3px] border-l-[5px] border-[#909296]">
          <ChartBar />
          <DailyChart />
          <div className="h-[5px] shrink-0 bg-[#3c5187]" />
          <div className="h-px shrink-0 bg-[#d0d7e8]" />
          <ChartBar second />
          <MinuteChart />
        </div>
      </div>
    </main>
  );
}
